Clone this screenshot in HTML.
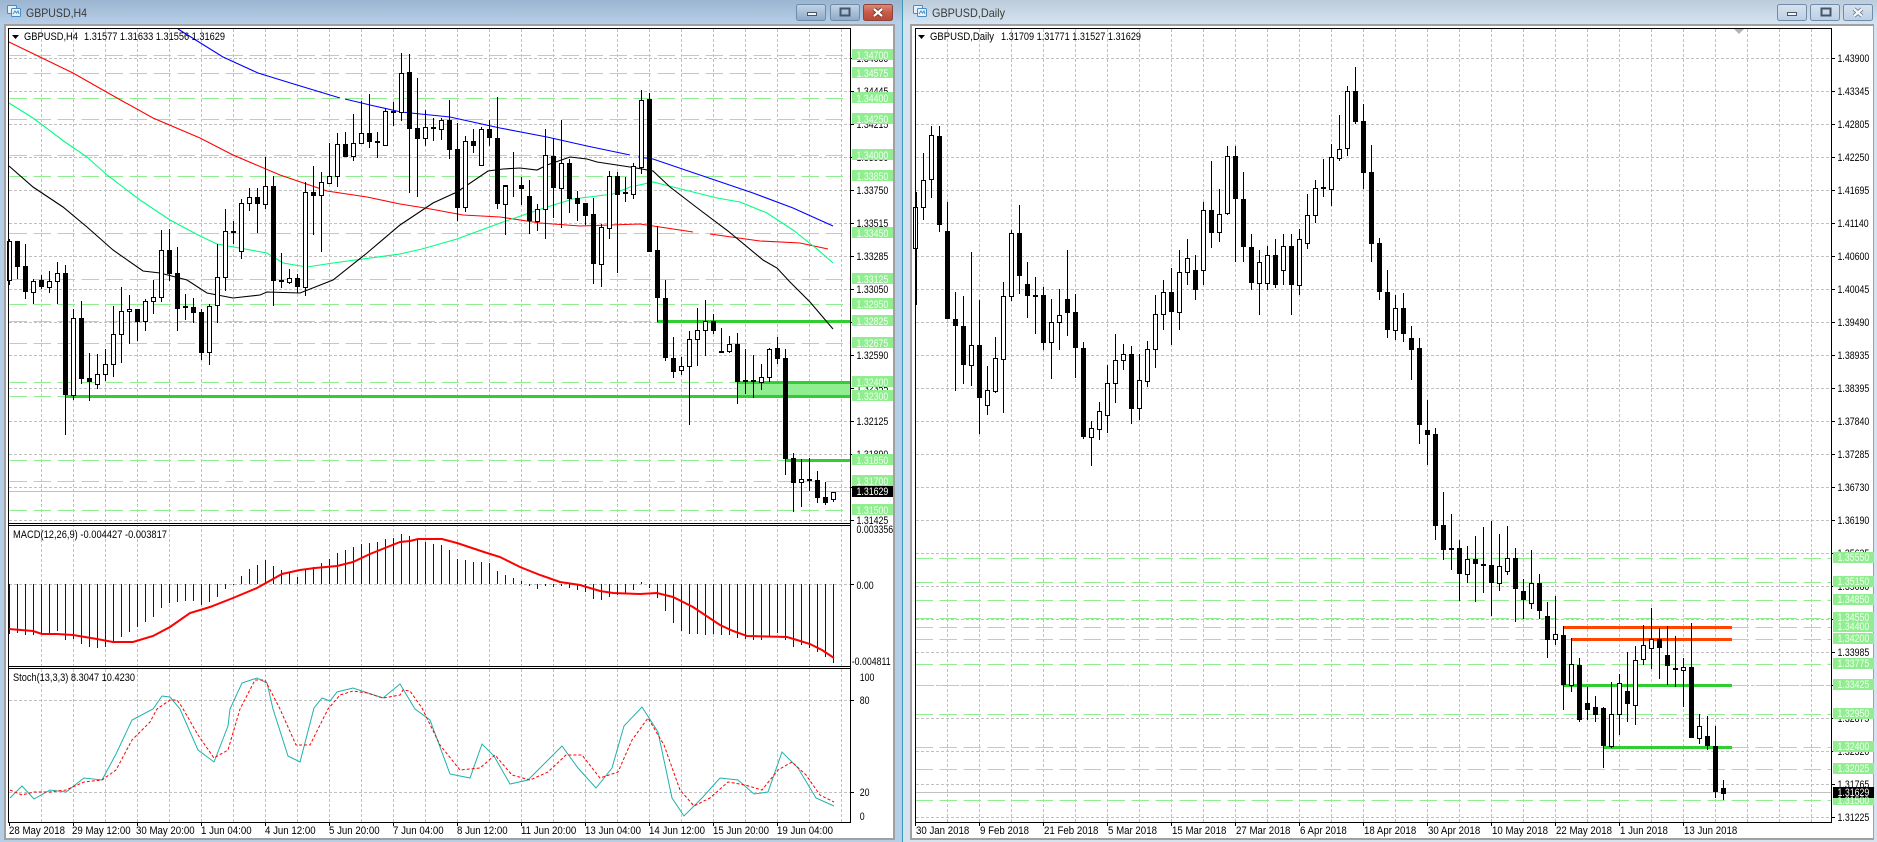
<!DOCTYPE html>
<html><head><meta charset="utf-8"><title>GBPUSD</title>
<style>
html,body{margin:0;padding:0;background:#fff;width:1877px;height:842px;overflow:hidden}
svg{display:block}
text{font-family:"Liberation Sans",sans-serif;font-size:11px;fill:#000}
.g text{fill:#f2fff2}
.t{font-size:12px;fill:#3a3a3a}
</style></head><body>
<svg width="1877" height="842" viewBox="0 0 1877 842" xmlns="http://www.w3.org/2000/svg">
<defs>
<linearGradient id="a" x1="0" y1="0" x2="0" y2="1"><stop offset="0" stop-color="#9bb4cf"/><stop offset="1" stop-color="#b7cfe8"/></linearGradient>
<linearGradient id="b" x1="0" y1="0" x2="0" y2="1"><stop offset="0" stop-color="#bccbd9"/><stop offset="1" stop-color="#d6e4f2"/></linearGradient>
<linearGradient id="c" x1="0" y1="0" x2="0" y2="1"><stop offset="0" stop-color="#c4d4e6"/><stop offset=".5" stop-color="#a9bfd8"/><stop offset="1" stop-color="#8ea9c8"/></linearGradient>
<linearGradient id="d" x1="0" y1="0" x2="0" y2="1"><stop offset="0" stop-color="#dc8c7c"/><stop offset=".5" stop-color="#c85a48"/><stop offset="1" stop-color="#b84a3a"/></linearGradient>
<linearGradient id="e" x1="0" y1="0" x2="0" y2="1"><stop offset="0" stop-color="#d7e2ee"/><stop offset="1" stop-color="#bccfe4"/></linearGradient>
</defs>
<!-- frames -->
<rect x="0" y="0" width="903" height="842" fill="#b6cfe8"/>
<rect x="903" y="0" width="974" height="842" fill="#d5e3f1"/>
<rect x="0" y="0" width="903" height="24" fill="url(#a)"/>
<rect x="903" y="0" width="974" height="24" fill="url(#b)"/>
<rect x="902" y="0" width="1" height="842" fill="#3a9ab8"/>
<rect x="4" y="24" width="891" height="816" fill="#a0a0a0"/>
<rect x="6" y="26" width="887" height="812" fill="#fff"/>
<rect x="910" y="24" width="964" height="816" fill="#a0a0a0"/>
<rect x="912" y="26" width="961" height="812" fill="#fff"/>
<!-- title icons -->
<g fill="#e6f1fa" stroke="#4a8cc0"><rect x="7.5" y="5.5" width="9" height="8" rx="1"/><rect x="11.5" y="8.5" width="9" height="8" rx="1"/><path d="M13 14l2-3 1.500 2 1.500-2 1 3" fill="none"/><rect x="913.500" y="5.500" width="9" height="8" rx="1"/><rect x="917.500" y="8.500" width="9" height="8" rx="1"/><path d="M919 14l2-3 1.500 2 1.500-2 1 3" fill="none"/></g>
<text class="t" x="26" y="17" textLength="61" lengthAdjust="spacingAndGlyphs">GBPUSD,H4</text>
<text class="t" x="932" y="17" textLength="73" lengthAdjust="spacingAndGlyphs">GBPUSD,Daily</text>
<!-- window buttons -->
<g stroke="#6f8cab">
<rect x="796.500" y="4.500" width="29" height="16" rx="2" fill="url(#c)"/><rect x="830.500" y="4.500" width="29" height="16" rx="2" fill="url(#c)"/><rect x="863.500" y="4.500" width="29" height="16" rx="2" fill="url(#d)" stroke="#8e4438"/>
<rect x="1777.500" y="4.500" width="29" height="16" rx="2" fill="url(#e)"/><rect x="1810.500" y="4.500" width="29" height="16" rx="2" fill="url(#e)"/><rect x="1843.500" y="4.500" width="29" height="16" rx="2" fill="url(#e)"/>
</g>
<g fill="#f4f7fa" stroke="#46566a"><rect x="807.500" y="12.500" width="9" height="3"/><rect x="840.500" y="8.500" width="9" height="7" fill="none" stroke-width="2"/><rect x="1787.500" y="12.500" width="9" height="3"/><rect x="1821.500" y="8.500" width="9" height="7" fill="none" stroke-width="2"/></g>
<path d="M874 9l8 7M882 9l-8 7" stroke="#6b2c22" stroke-width="4"/><path d="M874 9l8 7M882 9l-8 7" stroke="#fff" stroke-width="2.400"/>
<path d="M1854 9l8 7M1862 9l-8 7" stroke="#66788e" stroke-width="4"/><path d="M1854 9l8 7M1862 9l-8 7" stroke="#f4f7fa" stroke-width="2.400"/>

<!-- grid -->
<g fill="none" stroke="#c0c0c0" stroke-dasharray="3 2" shape-rendering="crispEdges">
<path d="M41.5 29V822M73.5 29V822M105.5 29V822M137.5 29V822M169.5 29V822M201.5 29V822M233.5 29V822M265.5 29V822M297.5 29V822M329.5 29V822M361.5 29V822M393.5 29V822M425.5 29V822M457.5 29V822M489.5 29V822M521.5 29V822M553.5 29V822M585.5 29V822M617.5 29V822M649.5 29V822M681.5 29V822M713.5 29V822M745.5 29V822M777.5 29V822M809.5 29V822M841.5 29V822"/>
<path d="M9 58.5H850M9 91.5H850M9 124.5H850M9 157.5H850M9 190.5H850M9 223.5H850M9 256.5H850M9 289.5H850M9 322.5H850M9 355.5H850M9 388.5H850M9 421.5H850M9 454.5H850M9 487.5H850M9 520.5H850M9 584.5H850M9 700.5H850M9 792.5H850"/>
<path d="M947.5 29V822M979.5 29V822M1011.5 29V822M1043.5 29V822M1075.5 29V822M1107.5 29V822M1139.5 29V822M1171.5 29V822M1203.5 29V822M1235.5 29V822M1267.5 29V822M1299.5 29V822M1331.5 29V822M1363.5 29V822M1395.5 29V822M1427.5 29V822M1459.5 29V822M1491.5 29V822M1523.5 29V822M1555.5 29V822M1587.5 29V822M1619.5 29V822M1651.5 29V822M1683.5 29V822M1715.5 29V822M1747.5 29V822M1779.5 29V822M1811.5 29V822"/>
<path d="M916 58.5H1831M916 91.5H1831M916 124.5H1831M916 157.5H1831M916 190.5H1831M916 223.5H1831M916 256.5H1831M916 289.5H1831M916 322.5H1831M916 355.5H1831M916 388.5H1831M916 421.5H1831M916 454.5H1831M916 487.5H1831M916 520.5H1831M916 553.5H1831M916 586.5H1831M916 619.5H1831M916 652.5H1831M916 685.5H1831M916 718.5H1831M916 751.5H1831M916 784.5H1831M916 817.5H1831"/>
</g>
<path d="M9 491.5H850M916 792.5H1831" stroke="#c0c0c0" shape-rendering="crispEdges"/>

<!-- green levels -->
<g fill="none" stroke="#90ee90" stroke-dasharray="17.500 6.500" shape-rendering="crispEdges">
<path d="M9.300 55.500H850M9.300 73.500H850M9.300 98.500H850M9.300 119.500H850M9.300 155.500H850M9.300 176.500H850M9.300 233.500H850M9.300 279.500H850M9.300 304.500H850M9.300 321.500H850M9.300 343.500H850M9.300 382.500H850M9.300 396.500H850M9.300 460.500H850M9.300 481.500H850M9.300 510.500H850"/>
<path d="M915.300 558.500H1831M915.300 582.500H1831M915.300 600.500H1831M915.300 618.500H1831M915.300 627.500H1831M915.300 639.500H1831M915.300 664.500H1831M915.300 685.500H1831M915.300 714.500H1831M915.300 747.500H1831M915.300 769.500H1831M915.300 800.500H1831"/>
</g>
<rect x="737" y="382" width="113" height="14" fill="#90ee90"/>
<g stroke="#32cd32" stroke-width="3" fill="none"><path d="M657 321.500H850M737 382.500H850M65 396.500H850M786 460.500H850M1564 685.500H1732M1604 747.500H1732"/></g>
<path d="M1564 627.500H1732M1572 639.500H1732" stroke="#ff4500" stroke-width="3" fill="none"/>

<!-- moving averages -->
<g fill="none" stroke-width="1.100">
<path stroke="#0000ff" d="M178 29L223 57 258 73 297 85 340 98M345 99L370 105 401 112 450 117 500 128 547 137 587 146 630 155M638 157L653 159 700 175 753 193 793 208 833 226"/>
<path stroke="#ff0000" d="M9 42L40 57 73 73 117 98 153 118 200 138 233 155 280 175 327 191 367 197 400 204 425 208 463 215 500 217 540 223 580 226 640 224 693 232M710 234L760 241 800 243 828 249"/>
<path stroke="#00ff7f" d="M9 103L33 118 65 142 87 157 107 175 140 200 170 220 200 236 217 244 267 253 283 263 307 267 333 263 400 254 422 249 457 239 503 222 547 207 573 199 613 194 630 187 653 182 677 188 717 198 740 202 767 213 793 230 817 249 833 263"/>
<path stroke="#000" d="M9 166L33 187 63 207 87 227 113 250 143 271 160 273 187 280 207 293 233 298 260 295 267 292 300 293 333 280 367 253 400 225 433 203 457 192 488 171 503 169 520 168 537 170 547 165 570 157 587 159 597 162 630 167 653 171 670 187 700 210 728 231 763 260 777 268 790 282 810 302 833 329"/>
</g>

<!-- H4 wicks -->
<path fill="none" stroke="#000" d="M9.500 239V285M17.500 241V279M25.500 244V299M33.500 279V304M41.500 275V289M49.500 271V293M57.500 262V304M65.500 265V435M73.500 309V400M81.500 301V384M89.500 353V401M97.500 354V389M105.500 349V381M113.500 306V377M121.500 287V363M129.500 295V344M137.500 309V341M145.500 299V331M153.500 280V314M161.500 230V302M169.500 229V281M177.500 247V331M185.500 294V320M193.500 298V323M201.500 309V360M209.500 304V365M217.500 244V323M225.500 209V291M233.500 221V244M241.500 199V259M249.500 188V211M257.500 188V233M265.500 157V209M273.500 176V306M281.500 253V288M289.500 269V284M297.500 274V293M305.500 182V296M313.500 166V235M321.500 172V252M329.500 143V183M337.500 133V187M345.500 132V157M353.500 114V161M361.500 101V143M369.500 94V148M377.500 132V158M385.500 108V145M393.500 102V126M401.500 53V121M409.500 54V193M417.500 78V197M425.500 110V146M433.500 118V141M441.500 118V140M449.500 100V159M457.500 123V221M465.500 136V212M473.500 129V153M481.500 127V165M489.500 120V146M497.500 97V209M505.500 185V235M513.500 152V197M521.500 177V205M529.500 180V234M537.500 204V231M545.500 129V239M553.500 138V218M561.500 120V228M569.500 159V213M577.500 191V221M585.500 203V225M593.500 198V284M601.500 224V287M609.500 171V239M617.500 172V273M625.500 177V202M633.500 163V199M641.500 90V174M649.500 93V252M657.500 226V322M665.500 280V361M673.500 337V378M681.500 357V375M689.500 331V425M697.500 308V366M705.500 300V356M713.500 314V334M721.500 328V353M729.500 336V353M737.500 333V404M745.500 349V394M753.500 355V398M761.500 364V390M769.500 348V382M777.500 337V364M785.500 349V475M793.500 453V512M801.500 459V507M809.500 458V491M817.500 471V503M825.500 482V505M833.500 492V502"/>
<!-- H4 black bodies -->
<path fill="none" stroke="#000" stroke-width="5" d="M17.500 241V267M25.500 266V292M41.500 280V287M65.500 273V395M81.500 318V379M89.500 378V382M137.500 309V322M169.500 250V274M177.500 273V309M185.500 306V308M193.500 307V313M201.500 312V353M233.500 231V233M257.500 197V204M273.500 186V281M281.500 280V282M297.500 278V287M313.500 192V196M345.500 144V157M369.500 133V142M377.500 141V143M393.500 111V113M409.500 72V129M417.500 128V139M433.500 127V129M449.500 120V150M457.500 149V208M473.500 141V146M489.500 129V138M497.500 138V204M505.500 185V187M521.500 185V189M529.500 196V221M553.500 156V188M569.500 163V199M577.500 198V204M585.500 203V216M593.500 214V264M617.500 176V195M625.500 192V194M649.500 99V252M657.500 250V298M665.500 298V358M673.500 358V372M713.500 321V331M721.500 351V353M737.500 344V382M745.500 380V382M753.500 380V382M777.500 348V359M785.500 358V459M793.500 458V483M809.500 479V481M817.500 480V498M825.500 497V503"/>
<!-- H4 white bodies -->
<path fill="#fff" stroke="#000" d="M7.500 241.500h4V280.500h-4zM31.500 281.500h4V292.500h-4zM47.500 281.500h4V287.500h-4zM55.500 273.500h4V281.500h-4zM71.500 318.500h4V395.500h-4zM95.500 374.500h4V384.500h-4zM103.500 364.500h4V374.500h-4zM111.500 334.500h4V364.500h-4zM119.500 311.500h4V334.500h-4zM127.500 309.500h4V311.500h-4zM143.500 301.500h4V321.500h-4zM151.500 297.500h4V301.500h-4zM159.500 250.500h4V297.500h-4zM207.500 306.500h4V352.500h-4zM215.500 277.500h4V305.500h-4zM223.500 231.500h4V277.500h-4zM239.500 203.500h4V251.500h-4zM247.500 197.500h4V203.500h-4zM263.500 186.500h4V204.500h-4zM287.500 278.500h4V282.500h-4zM303.500 192.500h4V287.500h-4zM319.500 182.500h4V195.500h-4zM327.500 176.500h4V183.500h-4zM335.500 144.500h4V176.500h-4zM351.500 143.500h4V156.500h-4zM359.500 133.500h4V143.500h-4zM383.500 111.500h4V145.500h-4zM399.500 73.500h4V112.500h-4zM423.500 127.500h4V138.500h-4zM439.500 120.500h4V129.500h-4zM463.500 141.500h4V207.500h-4zM479.500 129.500h4V165.500h-4zM503.500 186.500h4V204.500h-4zM535.500 209.500h4V221.500h-4zM543.500 155.500h4V209.500h-4zM559.500 163.500h4V188.500h-4zM599.500 227.500h4V264.500h-4zM607.500 176.500h4V228.500h-4zM631.500 166.500h4V194.500h-4zM639.500 100.500h4V167.500h-4zM679.500 366.500h4V370.500h-4zM687.500 339.500h4V366.500h-4zM695.500 330.500h4V339.500h-4zM703.500 321.500h4V330.500h-4zM727.500 344.500h4V351.500h-4zM759.500 377.500h4V382.500h-4zM767.500 349.500h4V377.500h-4zM799.500 479.500h4V482.500h-4zM831.500 492.500h4V499.500h-4z"/>

<!-- MACD -->
<path fill="none" stroke="#0000dd" d="M9.500 584V634M17.500 584V633M25.500 584V635M33.500 584V635M41.500 584V633M49.500 584V633M57.500 584V631M65.500 584V640M73.500 584V639M81.500 584V644M89.500 584V647M97.500 584V648M105.500 584V647M113.500 584V642M121.500 584V637M129.500 584V632M137.500 584V627M145.500 584V622M153.500 584V617M161.500 584V608M169.500 584V603M177.500 584V602M185.500 584V601M193.500 584V601M201.500 584V605M209.500 584V602M217.500 584V597M225.500 584V589M233.500 584V585M241.500 584V576M249.500 584V569M257.500 584V565M265.500 584V560M273.500 584V566M281.500 584V570M289.500 584V572M297.500 584V577M305.500 584V570M313.500 584V567M321.500 584V563M329.500 584V559M337.500 584V553M345.500 584V550M353.500 584V547M361.500 584V544M369.500 584V543M377.500 584V542M385.500 584V539M393.500 584V538M401.500 584V534M409.500 584V536M417.500 584V539M425.500 584V542M433.500 584V544M441.500 584V545M449.500 584V550M457.500 584V559M465.500 584V560M473.500 584V562M481.500 584V562M489.500 584V563M497.500 584V571M505.500 584V575M513.500 584V578M521.500 584V581M529.500 584V586M537.500 584V589M545.500 584V586M553.500 584V587M561.500 584V586M569.500 584V588M577.500 584V590M585.500 584V592M593.500 584V599M601.500 584V600M609.500 584V597M617.500 584V595M625.500 584V594M633.500 584V590M641.500 584V582M649.500 584V588M657.500 584V598M665.500 584V611M673.500 584V623M681.500 584V631M689.500 584V634M697.500 584V634M705.500 584V635M713.500 584V634M721.500 584V635M729.500 584V635M737.500 584V638M745.500 584V639M753.500 584V640M761.500 584V640M769.500 584V637M777.500 584V633M785.500 584V640M793.500 584V647M801.500 584V645M809.500 584V648M817.500 584V652M825.500 584V657M833.500 584V663"/>
<path fill="none" stroke="#ff0000" stroke-width="2" d="M9 629L33 631 42 634 57 634 73 635 97 639 113 642 133 642 153 636 170 627 190 613 210 607 233 598 257 588 282 574 300 570 315 568 337 566 353 562 370 554 400 542 410 541 418 539 442 539 457 543 487 553 500 557 520 567 540 575 560 582 580 585 600 591 613 593 640 594 657 593 673 597 693 607 720 625 733 631 747 636 787 637 797 640 810 644 822 650 834 658"/>

<!-- Stoch -->
<path fill="none" stroke="#20b2aa" d="M10 798L22 786 34 799 50 790 66 792 84 778 102 780 116 754 132 720 153 709 162 696 170 697 180 709 198 750 214 762 228 726 230 709 242 683 257 678 267 683 273 709 288 756 300 762 314 708 322 698 330 701 337 692 353 688 383 698 400 684 415 709 430 720 450 774 470 778 482 744 494 756 510 784 528 780 546 762 562 746 578 768 596 788 612 768 624 726 642 707 658 732 672 798 684 816 702 798 720 778 738 780 754 794 768 792 782 752 798 768 816 798 834 806"/>
<path fill="none" stroke="#ff0000" stroke-dasharray="3 2" d="M10 790L22 795 34 792 50 792 66 790 84 782 102 780 116 770 132 740 150 722 157 709 170 700 177 700 182 707 198 735 214 758 228 750 240 709 255 680 265 680 280 709 296 745 310 745 328 709 340 695 353 691 367 693 383 698 400 695 403 690 410 691 422 708 440 745 460 770 480 768 495 755 512 775 530 780 548 772 566 755 582 755 600 778 618 772 632 740 648 718 664 745 680 790 694 806 710 798 728 782 745 785 762 790 778 770 792 762 806 775 820 795 834 802"/>

<!-- Daily wicks -->
<path fill="none" stroke="#000" d="M916.500 192V305M923.500 153V220M931.500 126V198M939.500 126V232M947.500 202V319M955.500 292V391M963.500 296V384M971.500 252V386M979.500 300V434M987.500 366V415M995.500 337V393M1003.500 282V413M1011.500 230V301M1019.500 205V294M1027.500 262V318M1035.500 277V334M1043.500 287V350M1051.500 299V379M1059.500 289V350M1067.500 250V336M1075.500 294V378M1083.500 342V439M1091.500 421V466M1099.500 402V440M1107.500 365V433M1115.500 334V403M1123.500 344V370M1131.500 346V424M1139.500 354V420M1147.500 341V387M1155.500 295V368M1163.500 280V330M1171.500 268V345M1179.500 250V330M1187.500 239V285M1195.500 255V300M1203.500 202V285M1211.500 161V248M1219.500 189V242M1227.500 146V215M1235.500 146V262M1243.500 172V262M1251.500 234V290M1259.500 250V315M1267.500 246V290M1275.500 239V288M1283.500 234V285M1291.500 234V315M1299.500 229V295M1307.500 194V249M1315.500 180V223M1323.500 159V197M1331.500 144V206M1339.500 115V161M1347.500 86V156M1355.500 67V124M1363.500 104V189M1371.500 145V262M1379.500 238V300M1387.500 270V338M1395.500 295V340M1403.500 293V342M1411.500 326V380M1419.500 338V444M1427.500 400V465M1435.500 428V540M1443.500 492V560M1451.500 514V570M1459.500 540V601M1467.500 546V583M1475.500 536V602M1483.500 527V593M1491.500 521V616M1499.500 534V591M1507.500 526V575M1515.500 548V622M1523.500 579V619M1531.500 550V609M1539.500 574V619M1547.500 602V658M1555.500 596V645M1563.500 626V710M1571.500 638V692M1579.500 658V722M1587.500 687V720M1595.500 696V722M1603.500 707V768M1611.500 682V748M1619.500 674V735M1627.500 652V722M1635.500 646V725M1643.500 625V665M1651.500 608V669M1659.500 628V679M1667.500 626V685M1675.500 636V687M1683.500 658V707M1691.500 623V738M1699.500 714V744M1707.500 716V750M1715.500 726V798M1723.500 780V800"/>
<!-- Daily black bodies -->
<path fill="none" stroke="#000" stroke-width="5" d="M939.500 136V225M947.500 231V319M955.500 319V326M963.500 326V365M979.500 345V398M1019.500 233V276M1027.500 284V296M1035.500 295V297M1043.500 295V343M1067.500 299V313M1075.500 312V348M1083.500 348V437M1131.500 354V409M1171.500 292V312M1195.500 270V290M1211.500 210V233M1235.500 156V199M1243.500 199V247M1251.500 247V283M1275.500 255V285M1291.500 246V285M1323.500 187V189M1355.500 91V122M1363.500 121V173M1371.500 172V244M1379.500 243V292M1387.500 292V330M1403.500 308V334M1411.500 338V350M1419.500 348V425M1427.500 430V435M1435.500 434V526M1443.500 525V550M1451.500 548V550M1459.500 548V574M1475.500 559V564M1483.500 564V566M1491.500 565V583M1515.500 558V589M1523.500 591V600M1539.500 583V611M1547.500 616V640M1563.500 635V685M1579.500 665V720M1587.500 703V710M1595.500 707V715M1603.500 708V746M1627.500 691V704M1659.500 639V648M1667.500 655V666M1675.500 668V670M1691.500 667V738M1707.500 736V746M1715.500 746V792M1723.500 788V794"/>
<!-- Daily white bodies -->
<path fill="#fff" stroke="#000" d="M913.500 207.500h4V248.500h-4zM921.500 180.500h4V207.500h-4zM929.500 135.500h4V179.500h-4zM969.500 345.500h4V365.500h-4zM985.500 390.500h4V405.500h-4zM993.500 358.500h4V391.500h-4zM1001.500 296.500h4V359.500h-4zM1009.500 233.500h4V296.500h-4zM1049.500 322.500h4V342.500h-4zM1057.500 315.500h4V322.500h-4zM1089.500 428.500h4V437.500h-4zM1097.500 411.500h4V429.500h-4zM1105.500 383.500h4V415.500h-4zM1113.500 360.500h4V383.500h-4zM1121.500 354.500h4V360.500h-4zM1137.500 380.500h4V408.500h-4zM1145.500 349.500h4V381.500h-4zM1153.500 314.500h4V349.500h-4zM1161.500 292.500h4V314.500h-4zM1177.500 272.500h4V312.500h-4zM1185.500 258.500h4V272.500h-4zM1201.500 210.500h4V270.500h-4zM1217.500 214.500h4V232.500h-4zM1225.500 156.500h4V213.500h-4zM1257.500 262.500h4V283.500h-4zM1265.500 255.500h4V283.500h-4zM1281.500 246.500h4V270.500h-4zM1297.500 239.500h4V285.500h-4zM1305.500 215.500h4V243.500h-4zM1313.500 188.500h4V215.500h-4zM1329.500 157.500h4V189.500h-4zM1337.500 149.500h4V158.500h-4zM1345.500 91.500h4V148.500h-4zM1393.500 308.500h4V330.500h-4zM1465.500 559.500h4V574.500h-4zM1497.500 566.500h4V583.500h-4zM1505.500 558.500h4V571.500h-4zM1529.500 583.500h4V603.500h-4zM1553.500 634.500h4V639.500h-4zM1569.500 664.500h4V685.500h-4zM1609.500 714.500h4V746.500h-4zM1617.500 683.500h4V714.500h-4zM1633.500 660.500h4V705.500h-4zM1641.500 645.500h4V659.500h-4zM1649.500 639.500h4V648.500h-4zM1681.500 667.500h4V670.500h-4zM1697.500 726.500h4V738.500h-4z"/>

<!-- borders & white margins -->
<rect x="851" y="29" width="42" height="809" fill="#fff"/>
<rect x="1832" y="29" width="41" height="809" fill="#fff"/>
<rect x="6" y="523" width="845" height="3" fill="#fff"/>
<rect x="6" y="666" width="845" height="3" fill="#fff"/>
<path fill="none" stroke="#000" shape-rendering="crispEdges" d="M8.500 28.500H850.500V822.500H8.500ZM8.500 523.500H850M8.500 525.500H850M8.500 666.500H850M8.500 668.500H850M915.500 28.500H1831.500V822.500H915.500Z"/>
<!-- ticks -->
<path stroke="#000" fill="none" shape-rendering="crispEdges" d="M851 58.500h3M851 91.500h3M851 124.500h3M851 157.500h3M851 190.500h3M851 223.500h3M851 256.500h3M851 289.500h3M851 322.500h3M851 355.500h3M851 388.500h3M851 421.500h3M851 454.500h3M851 487.500h3M851 520.500h3M851 584.500h3M851 700.500h3M851 792.500h3M1832 58.500h3M1832 91.500h3M1832 124.500h3M1832 157.500h3M1832 190.500h3M1832 223.500h3M1832 256.500h3M1832 289.500h3M1832 322.500h3M1832 355.500h3M1832 388.500h3M1832 421.500h3M1832 454.500h3M1832 487.500h3M1832 520.500h3M1832 553.500h3M1832 586.500h3M1832 619.500h3M1832 652.500h3M1832 685.500h3M1832 718.500h3M1832 751.500h3M1832 784.500h3M1832 817.500h3M9.500 823v3M73.500 823v3M137.500 823v3M201.500 823v3M265.500 823v3M329.500 823v3M393.500 823v3M457.500 823v3M521.500 823v3M585.500 823v3M649.500 823v3M713.500 823v3M777.500 823v3M915.500 823v3M979.500 823v3M1043.500 823v3M1107.500 823v3M1171.500 823v3M1235.500 823v3M1299.500 823v3M1363.500 823v3M1427.500 823v3M1491.500 823v3M1555.500 823v3M1619.500 823v3M1683.500 823v3"/>
<path d="M1734 29h10l-5 5z" fill="#b4b4b4"/>

<!-- axis labels left -->
<g transform="translate(856.500,0) scale(.8,1)">
<text y="62">1.34680</text><text y="95">1.34445</text><text y="128">1.34215</text><text y="161">1.33980</text><text y="194">1.33750</text><text y="227">1.33515</text><text y="260">1.33285</text><text y="293">1.33050</text><text y="326">1.32820</text><text y="359">1.32590</text><text y="392">1.32355</text><text y="425">1.32125</text><text y="458">1.31890</text><text y="524">1.31425</text>
<text y="533" x="0">0.003356</text><text y="589">0.00</text><text y="665" x="-6">-0.004811</text><text y="681" x="4">100</text><text y="704" x="4">80</text><text y="796" x="4">20</text><text y="820" x="4">0</text>
</g>
<!-- green tags left -->
<g fill="#90ee90"><rect x="852" y="49" width="41" height="11"/><rect x="852" y="67" width="41" height="11"/><rect x="852" y="92" width="41" height="11"/><rect x="852" y="113" width="41" height="11"/><rect x="852" y="149" width="41" height="11"/><rect x="852" y="170" width="41" height="11"/><rect x="852" y="227" width="41" height="11"/><rect x="852" y="273" width="41" height="11"/><rect x="852" y="298" width="41" height="11"/><rect x="852" y="315" width="41" height="11"/><rect x="852" y="337" width="41" height="11"/><rect x="852" y="376" width="41" height="11"/><rect x="852" y="390" width="41" height="11"/><rect x="852" y="454" width="41" height="11"/><rect x="852" y="475" width="41" height="11"/><rect x="852" y="504" width="41" height="11"/></g>
<rect x="852" y="486" width="41" height="11" fill="#000"/>
<g class="g" transform="translate(856.500,0) scale(.8,1)">
<text y="59">1.34700</text><text y="77">1.34575</text><text y="102">1.34400</text><text y="123">1.34250</text><text y="159">1.34000</text><text y="180">1.33850</text><text y="237">1.33450</text><text y="283">1.33125</text><text y="308">1.32950</text><text y="325">1.32825</text><text y="347">1.32675</text><text y="386">1.32400</text><text y="400">1.32300</text><text y="464">1.31850</text><text y="485">1.31700</text><text y="514">1.31500</text><text y="495" style="fill:#fff">1.31629</text>
</g>

<!-- axis labels right -->
<g transform="translate(1837.500,0) scale(.8,1)">
<text y="62">1.43900</text><text y="95">1.43345</text><text y="128">1.42805</text><text y="161">1.42250</text><text y="194">1.41695</text><text y="227">1.41140</text><text y="260">1.40600</text><text y="293">1.40045</text><text y="326">1.39490</text><text y="359">1.38935</text><text y="392">1.38395</text><text y="425">1.37840</text><text y="458">1.37285</text><text y="491">1.36730</text><text y="524">1.36190</text><text y="557">1.35635</text><text y="590">1.35080</text><text y="623">1.34525</text><text y="656">1.33985</text><text y="689">1.33430</text><text y="722">1.32875</text><text y="755">1.32320</text><text y="788">1.31765</text><text y="821">1.31225</text>
</g>
<g fill="#90ee90"><rect x="1833" y="552" width="41" height="11"/><rect x="1833" y="576" width="41" height="11"/><rect x="1833" y="594" width="41" height="11"/><rect x="1833" y="612" width="41" height="11"/><rect x="1833" y="621" width="41" height="11"/><rect x="1833" y="633" width="41" height="11"/><rect x="1833" y="658" width="41" height="11"/><rect x="1833" y="679" width="41" height="11"/><rect x="1833" y="708" width="41" height="11"/><rect x="1833" y="741" width="41" height="11"/><rect x="1833" y="763" width="41" height="11"/><rect x="1833" y="794" width="41" height="11"/></g>
<rect x="1833" y="787" width="41" height="11" fill="#000"/>
<g class="g" transform="translate(1837.500,0) scale(.8,1)">
<text y="561">1.35550</text><text y="585">1.35150</text><text y="603">1.34850</text><text y="621">1.34550</text><text y="630">1.34400</text><text y="642">1.34200</text><text y="667">1.33775</text><text y="688">1.33425</text><text y="717">1.32950</text><text y="750">1.32400</text><text y="772">1.32025</text><text y="804">1.31500</text><text y="796" style="fill:#fff">1.31629</text>
</g>

<!-- headers -->
<path d="M12 35h7l-3.500 4z" fill="#000"/><path d="M918 35h7l-3.500 4z" fill="#000"/>
<text x="24" y="40" textLength="54" lengthAdjust="spacingAndGlyphs">GBPUSD,H4</text>
<text x="84" y="40" textLength="141" lengthAdjust="spacingAndGlyphs">1.31577 1.31633 1.31556 1.31629</text>
<text x="930" y="40" textLength="64" lengthAdjust="spacingAndGlyphs">GBPUSD,Daily</text>
<text x="1001" y="40" textLength="140" lengthAdjust="spacingAndGlyphs">1.31709 1.31771 1.31527 1.31629</text>
<text x="13" y="538" textLength="154" lengthAdjust="spacingAndGlyphs">MACD(12,26,9) -0.004427 -0.003817</text>
<text x="13" y="681" textLength="122" lengthAdjust="spacingAndGlyphs">Stoch(13,3,3) 8.3047 10.4230</text>

<!-- date axes -->
<g font-size="11">
<text transform="translate(9,834) scale(.88,1)">28 May 2018</text>
<text transform="translate(72,834) scale(.88,1)">29 May 12:00</text>
<text transform="translate(136,834) scale(.88,1)">30 May 20:00</text>
<text transform="translate(201,834) scale(.88,1)">1 Jun 04:00</text>
<text transform="translate(265,834) scale(.88,1)">4 Jun 12:00</text>
<text transform="translate(329,834) scale(.88,1)">5 Jun 20:00</text>
<text transform="translate(393,834) scale(.88,1)">7 Jun 04:00</text>
<text transform="translate(457,834) scale(.88,1)">8 Jun 12:00</text>
<text transform="translate(521,834) scale(.88,1)">11 Jun 20:00</text>
<text transform="translate(585,834) scale(.88,1)">13 Jun 04:00</text>
<text transform="translate(649,834) scale(.88,1)">14 Jun 12:00</text>
<text transform="translate(713,834) scale(.88,1)">15 Jun 20:00</text>
<text transform="translate(777,834) scale(.88,1)">19 Jun 04:00</text>
<text transform="translate(916,834) scale(.88,1)">30 Jan 2018</text>
<text transform="translate(980,834) scale(.88,1)">9 Feb 2018</text>
<text transform="translate(1044,834) scale(.88,1)">21 Feb 2018</text>
<text transform="translate(1108,834) scale(.88,1)">5 Mar 2018</text>
<text transform="translate(1172,834) scale(.88,1)">15 Mar 2018</text>
<text transform="translate(1236,834) scale(.88,1)">27 Mar 2018</text>
<text transform="translate(1300,834) scale(.88,1)">6 Apr 2018</text>
<text transform="translate(1364,834) scale(.88,1)">18 Apr 2018</text>
<text transform="translate(1428,834) scale(.88,1)">30 Apr 2018</text>
<text transform="translate(1492,834) scale(.88,1)">10 May 2018</text>
<text transform="translate(1556,834) scale(.88,1)">22 May 2018</text>
<text transform="translate(1620,834) scale(.88,1)">1 Jun 2018</text>
<text transform="translate(1684,834) scale(.88,1)">13 Jun 2018</text>
</g>
</svg>
</body></html>
